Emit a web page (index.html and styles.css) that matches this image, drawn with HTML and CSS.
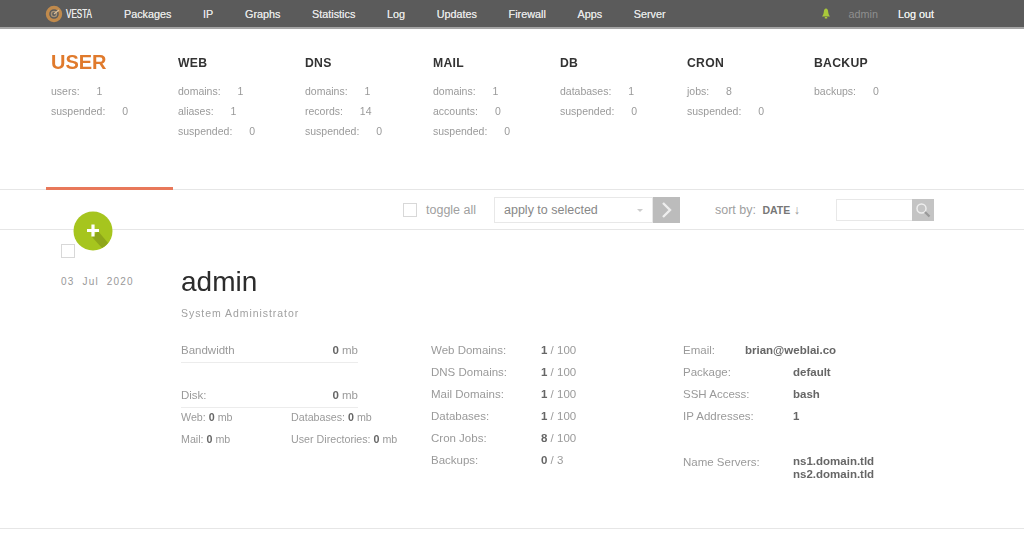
FILE: index.html
```html
<!DOCTYPE html>
<html lang="en">
<head>
    <meta charset="UTF-8">
    <title>Vesta - USER</title>
    <link rel="stylesheet" href="styles.css">
</head>
<body>
    <!-- top bar -->
    <div class="topbar">
        <div class="logo">
            <svg width="18" height="18" viewBox="0 0 18 18">
                <circle cx="9" cy="9" r="6.5" fill="none" stroke="#c08a4c" stroke-width="3.4"/>
                <circle cx="9" cy="9" r="2.6" fill="none" stroke="#a89274" stroke-width="1.4"/>
                <path d="M9 9 L14 5" stroke="#dcc09c" stroke-width="1.3"/>
            </svg>
            <span class="logo-text">VESTA</span>
        </div>
        <nav class="nav">
            <a>Packages</a>
            <a>IP</a>
            <a>Graphs</a>
            <a>Statistics</a>
            <a>Log</a>
            <a>Updates</a>
            <a>Firewall</a>
            <a>Apps</a>
            <a>Server</a>
        </nav>
        <div class="top-right">
            <svg class="bell" width="10" height="11" viewBox="0 0 10 11">
                <path d="M5 0.5 C6.5 0.5 7 2 7.2 4 C7.4 6 8 7 9 8.5 L1 8.5 C2 7 2.6 6 2.8 4 C3 2 3.5 0.5 5 0.5 Z" fill="#a9c83a"/>
                <rect x="3.8" y="9" width="2.4" height="1.5" fill="#a9c83a"/>
            </svg>
            <span class="top-user">admin</span>
            <a class="logout">Log out</a>
        </div>
    </div>

    <!-- stat tabs -->
    <div class="tabs">
        <div class="tab active">
            <div class="tab-title">USER</div>
            <p>users: <b>1</b></p>
            <p>suspended: <b>0</b></p>
        </div>
        <div class="tab">
            <div class="tab-title">WEB</div>
            <p>domains: <b>1</b></p>
            <p>aliases: <b>1</b></p>
            <p>suspended: <b>0</b></p>
        </div>
        <div class="tab">
            <div class="tab-title">DNS</div>
            <p>domains: <b>1</b></p>
            <p>records: <b>14</b></p>
            <p>suspended: <b>0</b></p>
        </div>
        <div class="tab">
            <div class="tab-title">MAIL</div>
            <p>domains: <b>1</b></p>
            <p>accounts: <b>0</b></p>
            <p>suspended: <b>0</b></p>
        </div>
        <div class="tab">
            <div class="tab-title">DB</div>
            <p>databases: <b>1</b></p>
            <p>suspended: <b>0</b></p>
        </div>
        <div class="tab">
            <div class="tab-title">CRON</div>
            <p>jobs: <b>8</b></p>
            <p>suspended: <b>0</b></p>
        </div>
        <div class="tab">
            <div class="tab-title">BACKUP</div>
            <p>backups: <b>0</b></p>
        </div>
    </div>

    <!-- toolbar -->
    <div class="toolbar">
        <div class="fab">
            <svg width="40" height="40" viewBox="0 0 40 40">
                <circle cx="20" cy="20" r="19.5" fill="#a6c51e"/>
                <path d="M25 20 L35 32 A19.5 19.5 0 0 1 29 37 L19 26 Z" fill="#8ea61a"/>
                <path d="M20 13.5 V25.5 M14 19.5 H26" stroke="#fff" stroke-width="3.2"/>
            </svg>
        </div>
        <span class="checkbox"></span>
        <span class="toggle-all">toggle all</span>
        <div class="select">apply to selected<span class="select-arrow"></span></div>
        <div class="go">
            <svg width="14" height="18" viewBox="0 0 14 18"><path d="M3 2 L10 9 L3 16" fill="none" stroke="#eee" stroke-width="2.4"/></svg>
        </div>
        <span class="sort">sort by: <b>DATE</b> <i>&#8595;</i></span>
        <div class="search"></div>
        <div class="search-btn">
            <svg width="16" height="16" viewBox="0 0 16 16">
                <circle cx="6.5" cy="6.5" r="4.5" fill="none" stroke="#eee" stroke-width="1.5"/>
                <path d="M10 10 L14.5 14.5" stroke="#999" stroke-width="2.2"/>
            </svg>
        </div>
    </div>

    <!-- user row -->
    <div class="row">
        <div class="row-left">
            <span class="checkbox"></span>
            <div class="date">03 &nbsp;Jul &nbsp;2020</div>
        </div>
        <div class="row-main">
            <h1>admin</h1>
            <div class="role">System Administrator</div>
            <div class="details">
                <div class="col-usage">
                    <div class="usage"><span>Bandwidth</span><span><b>0</b> mb</span></div>
                    <div class="usage disk"><span>Disk:</span><span><b>0</b> mb</span></div>
                    <div class="disk-grid">
                        <span>Web: <b>0</b> mb</span>
                        <span>Databases: <b>0</b> mb</span>
                        <span>Mail: <b>0</b> mb</span>
                        <span>User Directories: <b>0</b> mb</span>
                    </div>
                </div>
                <div class="col-limits">
                    <div class="line"><span class="key">Web Domains:</span><span><b>1</b> / 100</span></div>
                    <div class="line"><span class="key">DNS Domains:</span><span><b>1</b> / 100</span></div>
                    <div class="line"><span class="key">Mail Domains:</span><span><b>1</b> / 100</span></div>
                    <div class="line"><span class="key">Databases:</span><span><b>1</b> / 100</span></div>
                    <div class="line"><span class="key">Cron Jobs:</span><span><b>8</b> / 100</span></div>
                    <div class="line"><span class="key">Backups:</span><span><b>0</b> / 3</span></div>
                </div>
                <div class="col-info">
                    <div class="line"><span class="key email-key">Email:</span><b>brian@weblai.co</b></div>
                    <div class="line"><span class="key">Package:</span><b>default</b></div>
                    <div class="line"><span class="key">SSH Access:</span><b>bash</b></div>
                    <div class="line"><span class="key">IP Addresses:</span><b>1</b></div>
                    <div class="line ns"><span class="key">Name Servers:</span><b>ns1.domain.tld<br>ns2.domain.tld</b></div>
                </div>
            </div>
        </div>
    </div>
</body>
</html>
```

FILE: styles.css
```css
html, body {
    margin: 0;
    padding: 0;
}

body {
    width: 1024px;
    height: 541px;
    overflow: hidden;
    background-color: #fff;
    font-family: "Liberation Sans", Arial, sans-serif;
    color: #9a9a9a;
}

/* top bar */
.topbar {
    display: flex;
    align-items: center;
    height: 27px;
    background-color: #5b5b5b;
    border-bottom: 2px solid #a5a5a5;
    padding-left: 45px;
    font-size: 10.8px;
    color: #e4e4e4;
    text-shadow: 0 0 0.6px #e4e4e4;
}

.logo {
    display: flex;
    align-items: center;
    width: 79px;
    gap: 3px;
}

.logo-text {
    display: inline-block;
    font-size: 13px;
    color: #e9e9e9;
    transform: scaleX(0.62);
    transform-origin: left center;
}

.nav {
    display: flex;
    gap: 31.7px;
}

.top-right {
    display: flex;
    align-items: center;
    margin-left: auto;
    margin-right: 90px;
}

.bell { margin-right: 18px; }

.top-user {
    color: #8f8f8f;
    text-shadow: none;
    margin-right: 20px;
}

.logout { color: #eee; }

/* stat tabs */
.tabs {
    display: flex;
    height: 160px;
    padding-left: 46px;
    border-bottom: 1px solid #e6e6e6;
}

.tab {
    width: 127.2px;
    box-sizing: border-box;
    padding: 27px 0 0 5px;
    font-size: 10.5px;
    will-change: transform;
}

.tab.active {
    height: 161px;
    border-bottom: 3px solid #e8785a;
}

.tab-title {
    height: 28px;
    line-height: 14px;
    font-size: 12.2px;
    font-weight: bold;
    letter-spacing: 0.3px;
    color: #333;
}

.tab.active .tab-title {
    height: 33px;
    margin-top: -4px;
    line-height: 20px;
    font-size: 20px;
    letter-spacing: 0;
    color: #e07a2c;
}

.tab.active p:first-of-type {
    margin-top: -1px;
}

.tab p {
    margin: 0;
    height: 20px;
    line-height: 14px;
    word-spacing: 14px;
}

.tab b {
    font-weight: normal;
}

/* toolbar */
.toolbar {
    position: relative;
    display: flex;
    align-items: center;
    height: 39px;
    padding-left: 403px;
    border-bottom: 1px solid #e6e6e6;
}

.fab {
    position: absolute;
    left: 73px;
    top: 21px;
    width: 40px;
    height: 40px;
    z-index: 1;
}

.checkbox {
    display: block;
    box-sizing: border-box;
    width: 14px;
    height: 14px;
    border: 1px solid #d8d8d8;
}

.toggle-all {
    margin-left: 9px;
    font-size: 12.5px;
    color: #a0a0a0;
    width: 68px;
}

.select {
    position: relative;
    box-sizing: border-box;
    width: 159px;
    height: 26px;
    line-height: 25px;
    padding-left: 9px;
    border: 1px solid #e8e8e8;
    font-size: 12.5px;
    color: #888;
}

.select-arrow {
    position: absolute;
    right: 9px;
    top: 11px;
    border: 3px solid transparent;
    border-top: 3px solid #ccc;
}

.go {
    display: flex;
    align-items: center;
    justify-content: center;
    width: 27px;
    height: 26px;
    background-color: #bcbcbc;
}

.sort {
    margin-left: 35px;
    width: 121px;
    font-size: 12.5px;
    color: #a0a0a0;
}

.sort b {
    margin-left: 3px;
    font-size: 10.5px;
    color: #777;
}

.sort i {
    font-style: normal;
    color: #999;
}

.search {
    box-sizing: border-box;
    width: 76px;
    height: 22px;
    border: 1px solid #e8e8e8;
    border-right: 0;
}

.search-btn {
    display: flex;
    align-items: center;
    justify-content: center;
    width: 22px;
    height: 22px;
    background-color: #c4c4c4;
}

/* user row */
.row {
    display: flex;
    height: 298px;
    border-bottom: 1px solid #e6e6e6;
}

.row-left {
    box-sizing: border-box;
    width: 181px;
    padding: 14px 0 0 61px;
}

.date {
    margin-top: 18px;
    font-size: 10px;
    line-height: 12px;
    letter-spacing: 1.2px;
    color: #999;
}

.row-main {
    flex: 1;
    will-change: transform;
}

h1 {
    margin: 37px 0 0;
    font-size: 28px;
    line-height: 30px;
    font-weight: normal;
    color: #2c2c2c;
}

.role {
    margin-top: 9px;
    font-size: 10.5px;
    line-height: 14px;
    letter-spacing: 0.95px;
    color: #a0a0a0;
}

.details {
    display: flex;
    margin-top: 23px;
    font-size: 11.5px;
    line-height: 14px;
}

.details b {
    color: #666;
}

.col-usage {
    width: 250px;
}

.usage {
    display: flex;
    justify-content: space-between;
    width: 177px;
    height: 19px;
    border-bottom: 1px solid #ececec;
}

.usage.disk {
    margin-top: 25px;
}

.disk-grid {
    display: grid;
    grid-template-columns: 110px auto;
    row-gap: 8px;
    margin-top: 2px;
    font-size: 10.7px;
}

.col-limits {
    width: 252px;
}

.line {
    display: flex;
    height: 22px;
}

.key {
    width: 110px;
}

.email-key {
    width: 62px;
}

.ns {
    margin-top: 24px;
    line-height: 13px;
}

.ns .key {
    line-height: 14px;
}
```
